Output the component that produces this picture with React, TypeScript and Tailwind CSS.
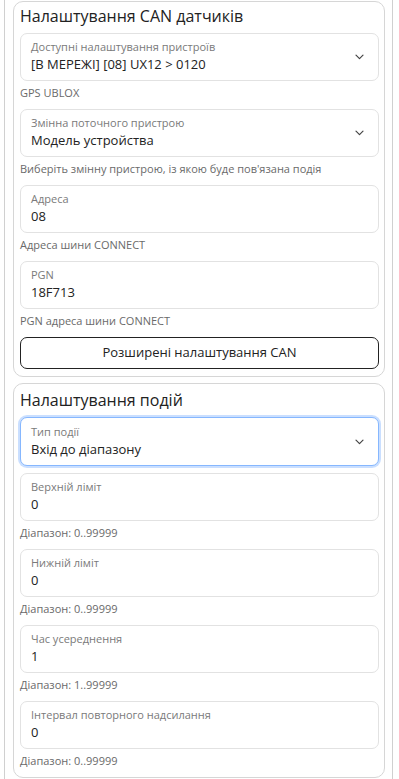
import React from 'react';

const font = { fontFamily: '"Open Sans", "Noto Sans", sans-serif' };

const Chevron = () => (
    <svg width="9" height="6" viewBox="0 0 9 6" fill="none" className="text-[#444]">
        <path d="M1 1.2l3.5 3.5 3.5-3.5" stroke="currentColor" strokeWidth="1.2" strokeLinecap="round" strokeLinejoin="round" />
    </svg>
);

interface FieldProps {
    label: string;
    value: string;
    select?: boolean;
    focused?: boolean;
}

const Field: React.FC<FieldProps> = ({ label, value, select, focused }) => (
    <div
        className={
            focused
                ? 'flex items-center h-[49px] rounded-[7px] border border-[#86b7fe] shadow-[0_0_0_2px_rgba(13,110,253,0.22)] pl-[10px] pr-[14px] bg-white'
                : 'flex items-center h-[48px] rounded-[7px] border border-[#e2e2e2] pl-[10px] pr-[14px] bg-white'
        }
    >
        <div className="flex-1 flex flex-col">
            <span className="text-[11px] leading-[14px] text-[#7a7a7a]">{label}</span>
            <span className="text-[13px] leading-[20px] text-[#222]">{value}</span>
        </div>
        {select && <Chevron />}
    </div>
);

const Hint: React.FC<{ children: React.ReactNode }> = ({ children }) => (
    <div className="text-[11px] leading-[16px] text-[#6a6a6a] pt-[4px] pb-[1px]">{children}</div>
);

const Card: React.FC<{ title: string; first?: boolean; children: React.ReactNode }> = ({ title, first, children }) => (
    <div className="ml-[8px] w-[372px] rounded-[10px] border border-[#d6d6d6] pl-[6px] pr-[5px] pb-[7px] bg-white">
        <h2 className={(first ? 'pt-[1px]' : 'pt-[3px]') + ' text-[16px] leading-[26px] text-[#222] mb-[4px]'}>{title}</h2>
        <div className="flex flex-col gap-[7px]">{children}</div>
    </div>
);

export default function App() {
    return (
        <div className="w-[399px] h-[779px] overflow-hidden bg-white" style={font}>
            <div className="ml-[4px] w-[389px] h-full border-x border-[#d0d0d0] pt-[1px] flex flex-col gap-[6px]">
                <Card title="Налаштування CAN датчиків" first>
                    <div>
                        <Field label="Доступні налаштування пристроїв" value="[В МЕРЕЖІ] [08] UX12 > 0120" select />
                        <Hint>GPS UBLOX</Hint>
                    </div>
                    <div>
                        <Field label="Змінна поточного пристрою" value="Модель устройства" select />
                        <Hint>Виберіть змінну пристрою, із якою буде пов'язана подія</Hint>
                    </div>
                    <div>
                        <Field label="Адреса" value="08" />
                        <Hint>Адреса шини CONNECT</Hint>
                    </div>
                    <div>
                        <Field label="PGN" value="18F713" />
                        <Hint>PGN адреса шини CONNECT</Hint>
                    </div>
                    <button
                        type="button"
                        className="h-[32px] rounded-[7px] border border-[#222] text-[13px] text-[#222]"
                    >
                        Розширені налаштування CAN
                    </button>
                </Card>
                <Card title="Налаштування подій">
                    <Field label="Тип події" value="Вхід до діапазону" select focused />
                    <div>
                        <Field label="Верхній ліміт" value="0" />
                        <Hint>Діапазон: 0..99999</Hint>
                    </div>
                    <div>
                        <Field label="Нижній ліміт" value="0" />
                        <Hint>Діапазон: 0..99999</Hint>
                    </div>
                    <div>
                        <Field label="Час усереднення" value="1" />
                        <Hint>Діапазон: 1..99999</Hint>
                    </div>
                    <div>
                        <Field label="Інтервал повторного надсилання" value="0" />
                        <Hint>Діапазон: 0..99999</Hint>
                    </div>
                </Card>
            </div>
        </div>
    );
}
